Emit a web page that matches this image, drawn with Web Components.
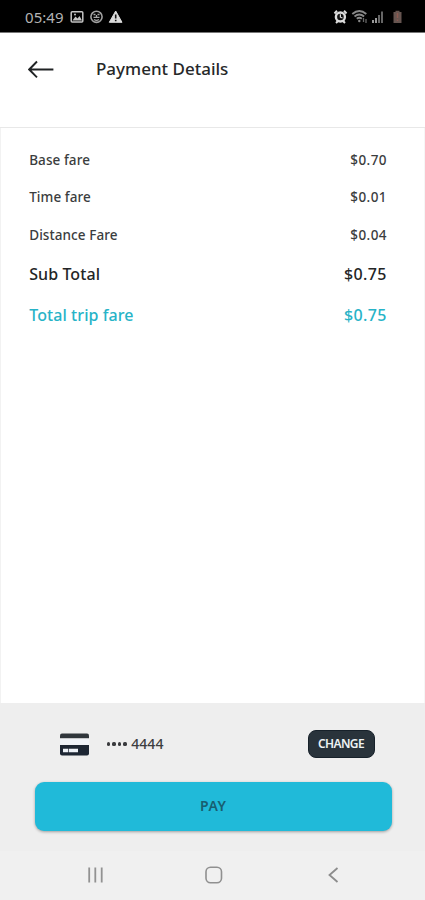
<!DOCTYPE html>
<html lang="en">
<head>
<meta charset="utf-8">
<title>Payment Details</title>
<style>
body{margin:0;background:#fff;font-family:"Noto Sans","Open Sans",sans-serif}
</style>
</head>
<body>
<payment-screen></payment-screen>
<script>
const define = (name, markup) => {
  const template = document.createElement('template');
  template.innerHTML = markup;
  customElements.define(name, class extends HTMLElement {
    constructor() {
      super();
      this.attachShadow({mode: 'open'}).append(template.content.cloneNode(true));
    }
  });
};

define('status-bar', `
<style>
:host{display:flex;box-sizing:border-box;height:32px;background:#000;color:#b4b4b4;align-items:center;padding:2px 21px 0 25px;font-size:15px;line-height:20px}
span{width:39px;white-space:nowrap;letter-spacing:.05px}
svg{display:block}
.left{margin-left:6px}.right{margin-left:auto}
</style>
<span>05:49</span>
<svg class="left" width="54" height="16" viewBox="0 0 54 16">
  <rect x="1.2" y="2.7" width="11.6" height="10.2" rx="1" fill="none" stroke="#c4c4c4" stroke-width="1.5"/>
  <path d="M2.5 11.5 5.5 7.5 7.5 9.5 9.5 7 12 11.5Z" fill="#c4c4c4"/><circle cx="5" cy="5.5" r="1" fill="#c4c4c4"/>
  <circle cx="26.5" cy="7.8" r="5.6" fill="none" stroke="#a0a0a0" stroke-width="1.6"/>
  <path d="M23.5 5.5h2M27.5 5.5h2M23.5 8.3h6M24 10.5q2.5 1.6 5 0M26.5 6v3" fill="none" stroke="#a8a8a8" stroke-width="1.3"/>
  <path d="M45.7 2 52 13.3H39.3Z" fill="#dcdcdc" stroke="#dcdcdc" stroke-linejoin="round"/>
  <path d="M45.7 5.5v4M45.7 10.7v1.5" stroke="#111" stroke-width="1.6"/>
</svg>
<svg class="right" width="71" height="16" viewBox="0 0 71 16">
  <path d="M1.5 4.5 4 1.8M11 1.8l2.5 2.7M3 14l2-2M12 14l-2-2" stroke="#ddd" stroke-width="2"/>
  <circle cx="7.4" cy="8" r="5.7" fill="#ddd"/><circle cx="7.4" cy="8" r="3.3" fill="#111"/>
  <path d="M7.4 5.2V8.2L9.5 9" fill="none" stroke="#ddd" stroke-width="1.2"/>
  <g fill="none" stroke="#888" stroke-width="1.9"><path d="M19.3 5q7-6 14 0M21.5 7.5q4.8-4 9.6 0M23.8 9.8q2.5-2 5 0"/></g>
  <circle cx="26.3" cy="12" r="1.2" fill="#888"/><path d="M30.5 9v4M33 10v4" stroke="#666" stroke-width="1.3"/>
  <path d="M40 11v3M43 9v5" stroke="#999" stroke-width="2"/><path d="M46 6v8M49 2.5V14" stroke="#666" stroke-width="2"/>
  <path d="M60.5 3h2V1.7h4V3h2v11h-8Z" fill="#665550"/><path d="M64.5 4v5M64.5 10.5V12" stroke="#8c5a50" stroke-width="1.5"/>
</svg>`);

define('title-bar', `
<style>
:host{display:flex;box-sizing:border-box;height:96px;padding:24px 28px 0;border-top:1px solid #777;border-bottom:1px solid #e8e8e8;align-items:flex-start;color:#262829}
svg{display:block;margin-top:3px;flex:none}
h1{margin:0 0 0 42px;font-size:17px;line-height:24px;font-weight:500;letter-spacing:0;white-space:nowrap}
</style>
<svg width="26" height="18" viewBox="0 0 26 18"><path d="M25.4 9.5H1.5M9 1.5 1.2 9.5 9 17.3" fill="none" stroke="#202324" stroke-width="1.9"/></svg>
<h1><slot></slot></h1>`);

define('fare-row', `
<style>
:host{display:flex;justify-content:space-between;align-items:center;height:37.3px;font-size:13.5px;line-height:20px;font-weight:500;color:#3b3d3e;white-space:nowrap;letter-spacing:.08px}
:host([kind]){height:41px;font-size:16px;color:#232526}
:host([kind=total]){color:#27b3c7}
::slotted([slot=amount]){letter-spacing:.4px;margin-right:-.4px}
</style>
<slot></slot><slot name="amount"></slot>`);

define('card-summary', `
<style>
:host{display:flex;align-items:center;height:30px;padding:0 17px 0 25px;font-size:14px;line-height:20px;font-weight:500;color:#3c3d40}
svg{display:block;margin-right:18px;flex:none}
.dots{display:flex;gap:2.3px;margin-right:4.5px}
.dots i{width:3.2px;height:3.2px;border-radius:50%;background:#393a3d}
.number{padding-bottom:1px;letter-spacing:.1px}
button{margin:0 0 0 auto;box-sizing:border-box;width:67px;height:28px;padding:0;border:1px solid #17212a;border-radius:8px;background:#29333b;color:#eef2f4;font:600 12px/20px "Noto Sans",sans-serif;letter-spacing:-.6px}
</style>
<svg width="29" height="23" viewBox="0 0 29 23">
  <path d="M0 5.3V2.5Q0 .5 2 .5H27Q29 .5 29 2.5V5.3Z" fill="#30363b"/>
  <rect y="5.8" width="29" height="6" fill="#f0f3f8"/>
  <path d="M0 12H29V20.5Q29 22.5 27 22.5H2Q0 22.5 0 20.5Z" fill="#1d2633"/>
  <path d="M3 15.8H8.3V19.2H3ZM9 15.8H18V19.2H9Z" fill="#eef2f8"/>
</svg>
<span class="dots"><i></i><i></i><i></i><i></i></span><span class="number"><slot></slot></span>
<button>CHANGE</button>`);

define('pay-button', `
<style>
:host{display:block}
button{display:block;width:100%;height:49px;padding:0 0 2px;border:0;border-radius:9px;background:#20bad9;color:#185e70;font:600 14px/20px "Noto Sans",sans-serif;letter-spacing:.5px;box-shadow:0 1px 3px #0005}
</style>
<button><slot></slot></button>`);

define('system-nav', `
<style>
:host{display:flex;box-sizing:border-box;height:49px;padding-bottom:1px;background:#f0f0f0;justify-content:center;align-items:center;gap:95px}
svg{display:block}
</style>
<svg width="24" height="20" viewBox="0 0 24 20"><path d="M7.2 2.5v15M13.3 2.5v15M19.7 2.5v15" stroke="#929292" stroke-width="1.8"/></svg>
<svg width="24" height="20" viewBox="0 0 24 20"><rect x="5" y="2.2" width="15.5" height="15.5" rx="4.5" fill="none" stroke="#909090" stroke-width="1.6"/></svg>
<svg width="24" height="20" viewBox="0 0 24 20"><path d="M17.5 3 9.5 10 17.5 17" fill="none" stroke="#8c8c8c" stroke-width="1.8"/></svg>`);

define('payment-screen', `
<style>
:host{display:flex;flex-direction:column;height:900px;width:425px}
main{flex:1;box-sizing:border-box;padding:13.3px 37.5px 0 28.2px;border-left:1px solid #f2f2f2;border-right:1px solid #f6f6f6}
footer{box-sizing:border-box;height:148px;background:#eee;padding:26px 33.5px 0 35px}
pay-button{margin-top:23px}
</style>
<status-bar></status-bar>
<title-bar>Payment Details</title-bar>
<main>
<fare-row>Base fare<span slot="amount">$0.70</span></fare-row>
<fare-row>Time fare<span slot="amount">$0.01</span></fare-row>
<fare-row>Distance Fare<span slot="amount">$0.04</span></fare-row>
<fare-row kind="subtotal">Sub Total<span slot="amount">$0.75</span></fare-row>
<fare-row kind="total">Total trip fare<span slot="amount">$0.75</span></fare-row>
</main>
<footer><card-summary>4444</card-summary><pay-button>PAY</pay-button></footer>
<system-nav></system-nav>`);
</script>
</body>
</html>
